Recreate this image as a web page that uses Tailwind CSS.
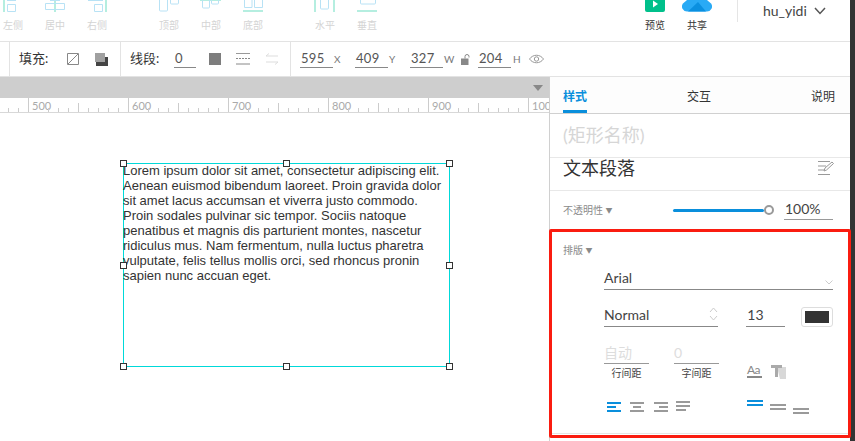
<!DOCTYPE html>
<html>
  <head>
    <meta charset="UTF-8" />
    <title>Editor</title>
    <script src="https://cdn.jsdelivr.net/npm/@tailwindcss/browser@4"></script>
  </head>
  <body class="bg-white">
    <div class="w-[855px] h-[441px] overflow-hidden flex text-[#333] font-['Lato','Noto_Sans_CJK_SC',sans-serif]">
      <div class="w-[850px] shrink-0 flex flex-col">
        <!-- Top toolbar -->
        <header class="h-[42px] shrink-0 border-b border-[#e3e3e3] flex relative">
          <div class="flex text-[10px] text-[#d4d4d4] leading-none -ml-[8px]">
            <div class="w-[42px] flex flex-col items-center">
              <svg width="30" height="12" viewBox="0 0 30 12" fill="none"><path d="M6 0v12" stroke="#b5eee0" stroke-width="2"/><path d="M9.500 4.500h8v7h-8zM9 .5h9" stroke="#b8e2f5"/></svg>
              <span class="mt-[8px]">左侧</span>
            </div>
            <div class="w-[42px] flex flex-col items-center">
              <svg width="30" height="12" viewBox="0 0 30 12" fill="none"><path d="M15 0v12" stroke="#b5eee0" stroke-width="2"/><path d="M5.500 3.500h19v6h-19zM10 .5h10" stroke="#b8e2f5"/></svg>
              <span class="mt-[8px]">居中</span>
            </div>
            <div class="w-[42px] flex flex-col items-center">
              <svg width="30" height="12" viewBox="0 0 30 12" fill="none"><path d="M24 0v12" stroke="#b5eee0" stroke-width="2"/><path d="M12.500 4.500h8v7h-8zM6 .5h15" stroke="#b8e2f5"/></svg>
              <span class="mt-[8px]">右侧</span>
            </div>
          </div>
          <div class="flex text-[10px] text-[#d4d4d4] leading-none ml-[30px]">
            <div class="w-[42px] flex flex-col items-center">
              <svg width="30" height="12" viewBox="0 0 30 12" fill="none"><path d="M5.500 0v10a1 1 0 0 0 1 1h6a1 1 0 0 0 1-1V0M16.500 0v3a1 1 0 0 0 1 1h6a1 1 0 0 0 1-1V0" stroke="#b8e2f5"/></svg>
              <span class="mt-[8px]">顶部</span>
            </div>
            <div class="w-[42px] flex flex-col items-center">
              <svg width="30" height="12" viewBox="0 0 30 12" fill="none"><path d="M4 .5h21" stroke="#b5eee0"/><path d="M6.500 0v7a1 1 0 0 0 1 1h5a1 1 0 0 0 1-1V0M15.500 0v3a1 1 0 0 0 1 1h5a1 1 0 0 0 1-1V0" stroke="#b8e2f5"/></svg>
              <span class="mt-[8px]">中部</span>
            </div>
            <div class="w-[42px] flex flex-col items-center">
              <svg width="30" height="12" viewBox="0 0 30 12" fill="none"><path d="M6.500 0v7.500h7.500V0M16.500 0v7.500h8V0" stroke="#b8e2f5"/><path d="M5 11h20" stroke="#b5eee0" stroke-width="2"/></svg>
              <span class="mt-[8px]">底部</span>
            </div>
          </div>
          <div class="flex text-[10px] text-[#d4d4d4] leading-none ml-[30px]">
            <div class="w-[42px] flex flex-col items-center">
              <svg width="30" height="12" viewBox="0 0 30 12" fill="none"><path d="M5 0v12M24 0v12" stroke="#b5eee0" stroke-width="2"/><path d="M10.500 0v8a1 1 0 0 0 1 1h6a1 1 0 0 0 1-1V0" stroke="#b8e2f5"/></svg>
              <span class="mt-[8px]">水平</span>
            </div>
            <div class="w-[42px] flex flex-col items-center">
              <svg width="30" height="12" viewBox="0 0 30 12" fill="none"><path d="M8.500 0v3a1 1 0 0 0 1 1h13a1 1 0 0 0 1-1V0" stroke="#b8e2f5"/><path d="M5 11h20" stroke="#b5eee0" stroke-width="2"/></svg>
              <span class="mt-[8px]">垂直</span>
            </div>
          </div>
          <div class="ml-auto flex text-[10px] leading-none">
            <div class="w-[40px] flex flex-col items-center">
              <svg width="20" height="12" viewBox="0 0 20 12"><path d="M0 0h20v10a2 2 0 0 1-2 2H2a2 2 0 0 1-2-2z" fill="#00c08b"/><path d="M8 .5l5 3.500-5 3.500z" fill="#fff"/></svg>
              <span class="mt-[8px]">预览</span>
            </div>
            <div class="w-[40px] ml-[2px] flex flex-col items-center">
              <svg width="30" height="12" viewBox="0 0 30 12"><path d="M5 11.500a5 5 0 0 1-4-8L5 0h20l4 3.500a5 5 0 0 1-4 8z" fill="#29aaf5"/><path d="M6 11.500L16 2l8 9.500z" fill="#0b90e0"/></svg>
              <span class="mt-[8px]">共享</span>
            </div>
            <div class="w-[113px] ml-[20px] h-[22px] border-l border-[#e5e5e5] flex items-center pl-[25px] pb-[1px] text-[14px] text-[#444]">
              hu_yidi
              <svg width="12" height="8" viewBox="0 0 12 8" fill="none" class="ml-[7px]"><path d="M1 1l5 5.500L11 1" stroke="#555" stroke-width="1.500"/></svg>
            </div>
          </div>
        </header>

        <!-- Style toolbar -->
        <div class="h-[35px] shrink-0 border-b border-[#e3e3e3] flex items-center text-[13px] text-[#333]">
          <div class="w-[10px] h-full border-r border-[#e3e3e3]"></div>
          <div class="w-[111px] h-full border-r border-[#e3e3e3] flex items-center pl-[9px]">
            <span class="w-[48px]">填充:</span>
            <svg width="12" height="12" viewBox="0 0 12 12" fill="none"><path d="M.5.5h11v11H.500zM1 11L11 1" stroke="#888"/></svg>
            <svg width="13" height="13" viewBox="0 0 13 13" class="ml-[16px]"><path d="M1 4h12v9H1z" fill="#444"/><path d="M0 0h10v9H0z" fill="#a0a0a0"/></svg>
          </div>
          <div class="w-[170px] h-full border-r border-[#e3e3e3] flex items-center pl-[9px]">
            <span class="w-[44px]">线段:</span>
            <span class="w-[22px] border-b border-[#888] leading-[17px] pl-[1px] text-[#555]">0</span>
            <span class="ml-[13px] w-[12px] h-[12px] bg-[#7d7d7d]"></span>
            <svg width="15" height="12" viewBox="0 0 15 12" fill="none" class="ml-[15px]"><path d="M0 .5h14" stroke="#999"/><path d="M0 5.500h14" stroke="#888" stroke-dasharray="2 1"/><path d="M0 11h14" stroke="#888"/></svg>
            <svg width="14" height="12" viewBox="0 0 14 12" fill="none" class="ml-[14px]"><path d="M13 3H1l3-2.500M1 9h12l-3 2.500" stroke="#ddd"/></svg>
          </div>
          <div class="flex items-center text-[#555] tracking-[.3px] pl-[9px]">
            <span class="w-[33px] border-b border-[#888] leading-[17px] pl-[1px]">595</span>
            <span class="w-[22px] pl-[1px] text-[10px] text-[#777]">X</span>
            <span class="w-[33px] border-b border-[#888] leading-[17px] pl-[1px]">409</span>
            <span class="w-[22px] pl-[1px] text-[10px] text-[#777]">Y</span>
            <span class="w-[33px] border-b border-[#888] leading-[17px] pl-[1px]">327</span>
            <span class="w-[11px] pl-[1px] text-[10px] text-[#777]">W</span>
            <svg width="10" height="11" viewBox="0 0 10 11" class="ml-[7px]"><path d="M0 4.500h7.500V11H0z" fill="#888"/><path d="M4 4.500V2.500a2 2 0 0 1 4 0v1" fill="none" stroke="#888"/></svg>
            <span class="ml-[7px] w-[33px] border-b border-[#888] leading-[17px] pl-[1px]">204</span>
            <span class="ml-[2px] w-[16px] text-[10px] text-[#777]">H</span>
            <svg width="15" height="10" viewBox="0 0 15 10" fill="none"><path d="M.5 5C4 0 11 0 14.500 5 11 10 4 10 .5 5z" stroke="#999"/><circle cx="7.500" cy="5" r="2.200" stroke="#999"/></svg>
          </div>
        </div>

        <div class="flex-1 flex min-h-0">
          <!-- Canvas -->
          <main class="w-[549px] shrink-0 flex flex-col min-h-0">
            <div class="h-[21px] bg-[#cecece] relative shrink-0">
              <span class="absolute right-[6px] top-[8px] border-x-[5px] border-x-transparent border-t-[6px] border-t-[#888]"></span>
            </div>
            <!-- Ruler -->
            <div class="h-[15px] shrink-0 border-b border-[#d8d8d8] relative overflow-hidden text-[11px] leading-[15px] text-[#aaa] flex">
              <div class="w-[29px] h-full border-r border-[#ccc] shrink-0"></div>
              <div class="w-[100px] h-full border-r border-[#ccc] shrink-0 pl-[3px]">500</div>
              <div class="w-[100px] h-full border-r border-[#ccc] shrink-0 pl-[3px]">600</div>
              <div class="w-[100px] h-full border-r border-[#ccc] shrink-0 pl-[3px]">700</div>
              <div class="w-[100px] h-full border-r border-[#ccc] shrink-0 pl-[3px]">800</div>
              <div class="w-[100px] h-full border-r border-[#ccc] shrink-0 pl-[3px]">900</div>
              <div class="w-[20px] h-full shrink-0 pl-[3px] overflow-hidden">100</div>
              <svg class="absolute left-0 bottom-0" width="549" height="15" viewBox="0 0 549 15" stroke="#ccc" fill="none"><path d="M8.500 15v-4M18.500 15v-4M48.500 15v-4M58.500 15v-4M68.500 15v-4M78.500 15v-9M88.500 15v-4M98.500 15v-4M108.500 15v-4M118.500 15v-4M148.500 15v-4M158.500 15v-4M168.500 15v-4M178.500 15v-9M188.500 15v-4M198.500 15v-4M208.500 15v-4M218.500 15v-4M248.500 15v-4M258.500 15v-4M268.500 15v-4M278.500 15v-9M288.500 15v-4M298.500 15v-4M308.500 15v-4M318.500 15v-4M348.500 15v-4M358.500 15v-4M368.500 15v-4M378.500 15v-9M388.500 15v-4M398.500 15v-4M408.500 15v-4M418.500 15v-4M448.500 15v-4M458.500 15v-4M468.500 15v-4M478.500 15v-9M488.500 15v-4M498.500 15v-4M508.500 15v-4M518.500 15v-4"/></svg>
            </div>
            <!-- Selected text box -->
            <div class="flex-1 relative">
              <div class="absolute left-[123px] top-[50px] w-[327px] h-[204px] border border-[#00d9d9] font-['Liberation_Sans',sans-serif] text-[13px] leading-[15px] text-[#333]">
                <p class="-ml-[1px] -mt-[1px] pr-[2px]">Lorem ipsum dolor sit amet, consectetur adipiscing elit. Aenean euismod bibendum laoreet. Proin gravida dolor sit amet lacus accumsan et viverra justo commodo. Proin sodales pulvinar sic tempor. Sociis natoque penatibus et magnis dis parturient montes, nascetur ridiculus mus. Nam fermentum, nulla luctus pharetra vulputate, felis tellus mollis orci, sed rhoncus pronin sapien nunc accuan eget.</p>
                <span class="absolute -left-[4px] -top-[4px] w-[7px] h-[7px] bg-white border border-[#333]"></span>
                <span class="absolute left-[159px] -top-[4px] w-[7px] h-[7px] bg-white border border-[#333]"></span>
                <span class="absolute -right-[4px] -top-[4px] w-[7px] h-[7px] bg-white border border-[#333]"></span>
                <span class="absolute -left-[4px] top-[98px] w-[7px] h-[7px] bg-white border border-[#333]"></span>
                <span class="absolute -right-[4px] top-[98px] w-[7px] h-[7px] bg-white border border-[#333]"></span>
                <span class="absolute -left-[4px] -bottom-[4px] w-[7px] h-[7px] bg-white border border-[#333]"></span>
                <span class="absolute left-[159px] -bottom-[4px] w-[7px] h-[7px] bg-white border border-[#333]"></span>
                <span class="absolute -right-[4px] -bottom-[4px] w-[7px] h-[7px] bg-white border border-[#333]"></span>
              </div>
            </div>
          </main>

          <!-- Right panel -->
          <aside class="w-[301px] shrink-0 border-l border-[#d0d0d0] flex flex-col min-h-0 relative z-10">
            <div class="h-[37px] shrink-0 border-b border-[#d0d0d0] bg-[#fdfdfd] flex justify-between text-[12px] pl-[13px] pr-[15px] pt-[11px]">
              <span class="h-[25px] border-b-[3px] border-[#0a8fdc] text-[#0a8fdc] font-bold">样式</span>
              <span>交互</span>
              <span>说明</span>
            </div>
            <div class="h-[44px] shrink-0 border-b border-[#e8e8e8] pl-[13px] flex items-center text-[18px] text-[#d6d6d6]">(矩形名称)</div>
            <div class="h-[33px] shrink-0 border-b border-[#e8e8e8] pl-[13px] pr-[16px] flex justify-between text-[18px] leading-[20px] text-[#333]">
              <span>文本段落</span>
              <svg width="16" height="14" viewBox="0 0 16 14" fill="none" class="mt-[3px]" stroke="#999"><path d="M0 .5h12M0 5h8M0 9h6M0 13.500h12M6 10l1-3 7-6 1.500 1.500-7 6.500z"/></svg>
            </div>
            <div class="h-[38px] shrink-0 pl-[13px] flex items-center text-[10px] text-[#8a8a8a]">
              <span class="w-[110px]">不透明性 <span class="text-[7px] align-[1px]">▼</span></span>
              <span class="w-[91px] h-[3px] rounded-full bg-[#0a8fdc]"></span>
              <span class="w-[10px] h-[10px] rounded-full border-2 border-[#999] bg-white"></span>
              <span class="ml-[10px] w-[49px] pl-[1px] border-b border-[#999] text-[14px] leading-[20px] text-[#444] -mt-[1px]">100%</span>
            </div>
            <!-- Typography block, outlined in red -->
            <section class="h-[209px] w-[302px] shrink-0 -ml-[1px] border-[3px] border-[#fa1c10] rounded-[2px] pl-[11px] pr-[15px] bg-white">
              <div class="text-[10px] text-[#8a8a8a] mt-[11px] leading-[15px]">排版 <span class="text-[7px] align-[1px]">▼</span></div>
              <div class="ml-[41px] mt-[9px] h-[23px] border-b border-[#888] flex justify-between items-end text-[14px] leading-[23px] text-[#444]">
                Arial
                <svg width="8" height="5" viewBox="0 0 8 5" fill="none" class="mb-[4px]"><path d="M.5.5L4 4 7.500.5" stroke="#ccc"/></svg>
              </div>
              <div class="ml-[41px] mt-[14px] flex items-start">
                <div class="w-[115px] h-[23px] border-b border-[#888] flex justify-between text-[14px] leading-[21px] text-[#444]">
                  Normal
                  <svg width="9" height="14" viewBox="0 0 9 14" fill="none" stroke="#ccc" class="mt-[3px]"><path d="M1 5l3.500-4L8 5M1 9l3.500 4L8 9"/></svg>
                </div>
                <div class="ml-[28px] w-[39px] h-[23px] border-b border-[#888] text-[14px] leading-[21px] pl-[1px] text-[#444]">13</div>
                <div class="ml-[16px] w-[32px] h-[20px] border border-[#ddd] rounded-[3px] p-[3px] mt-[3px]"><div class="h-full bg-[#333]"></div></div>
              </div>
              <div class="ml-[41px] mt-[16px] flex">
                <div class="w-[45px] text-center">
                  <div class="h-[21px] border-b border-[#999] text-[14px] text-[#ddd] text-left leading-[19px]">自动</div>
                  <div class="text-[10px] leading-[15px] mt-[2px] text-[#444]">行间距</div>
                </div>
                <div class="w-[45px] ml-[25px] text-center">
                  <div class="h-[21px] border-b border-[#999] text-[14px] text-[#ddd] text-left leading-[19px]">0</div>
                  <div class="text-[10px] leading-[15px] mt-[2px] text-[#444]">字间距</div>
                </div>
                <div class="ml-[28px] flex mt-[21px]">
                  <div class="w-[15px] h-[14px] border-b-2 border-[#888] text-[12px] leading-[11px] text-[#888] tracking-[-.5px]">Aa</div>
                  <svg width="16" height="15" viewBox="0 0 16 15" class="ml-[9px]"><path d="M6 3h9v12H9z" fill="#d8d8d8"/><path d="M0 1h11v3H7v9H4V4H0z" fill="#aaa"/></svg>
                </div>
              </div>
              <svg width="206" height="15" viewBox="0 0 206 15" class="ml-[41px] mt-[19px]"><path d="M3 2h14v2H3zM3 6h9v2H3zM3 10h14v2H3zM143 0h16v2h-16zM143 4h16v2h-16z" fill="#0a8fdc"/><path d="M26 2h14v2H26zM29 6h8v2h-8zM26 10h14v2H26zM50 2h14v2H50zM55 6h9v2h-9zM50 10h14v2H50zM72 1h14v2H72zM72 5h14v2H72zM72 9h10v2H72zM166 4h16v2h-16zM166 8h16v2h-16zM189 8h16v2h-16zM189 12h16v2h-16z" fill="#9a9a9a"/></svg>
              <div class="-ml-[11px] -mr-[15px] mt-[18px] h-px bg-[#e5e5e5]"></div>
            </section>
          </aside>
        </div>
      </div>
      <div class="flex-1 bg-[#333]"></div>
    </div>
  </body>
</html>
